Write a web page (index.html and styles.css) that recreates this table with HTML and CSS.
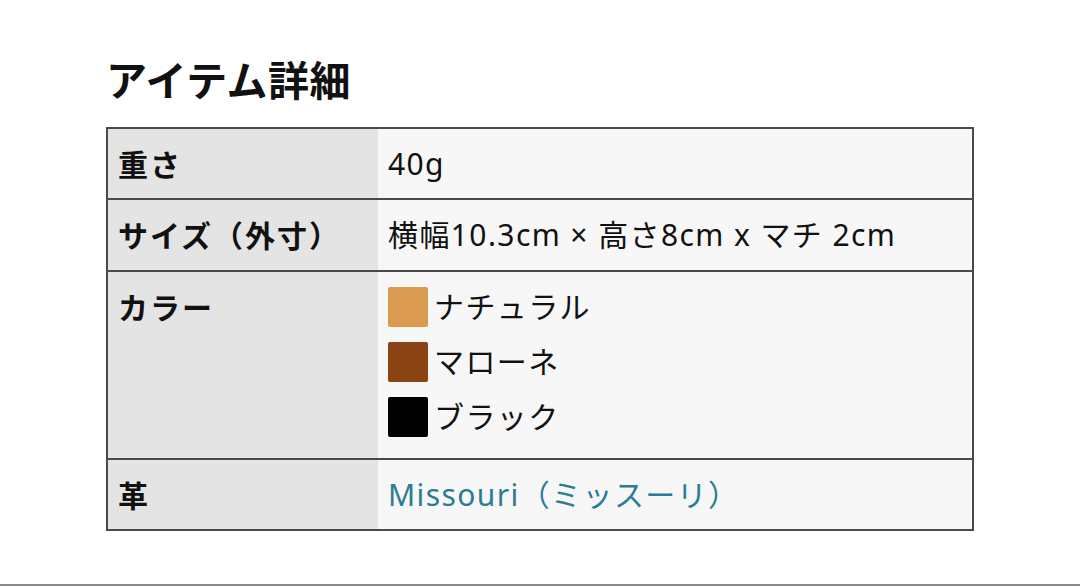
FILE: index.html
```html
<!DOCTYPE html>
<html lang="ja">
<head>
<meta charset="utf-8">
<title>アイテム詳細</title>
<link rel="stylesheet" href="styles.css">
</head>
<body>
<main class="page">
  <h2 class="title">アイテム詳細</h2>
  <table class="spec">
    <tr>
      <th>重さ</th>
      <td>40g</td>
    </tr>
    <tr class="size-row">
      <th>サイズ（外寸）</th>
      <td>横幅10.3cm × 高さ8cm x マチ 2cm</td>
    </tr>
    <tr class="colors-row">
      <th>カラー</th>
      <td>
        <ul class="colors">
          <li><span class="swatch natural"></span>ナチュラル</li>
          <li><span class="swatch marrone"></span>マローネ</li>
          <li><span class="swatch black"></span>ブラック</li>
        </ul>
      </td>
    </tr>
    <tr>
      <th>革</th>
      <td><a class="link" href="#">Missouri（ミッスーリ）</a></td>
    </tr>
  </table>
</main>
<div class="rule"></div>
</body>
</html>
```

FILE: styles.css
```css
html, body {
  margin: 0;
  padding: 0;
  background: #ffffff;
}
body {
  width: 1080px;
  height: 587px;
  overflow: hidden;
  position: relative;
  font-family: "Noto Sans", "Noto Sans CJK JP", sans-serif;
  color: #111;
}
.page {
  padding: 50px 0 0 106px;
  height: 532px;
  box-sizing: border-box;
}
.title {
  margin: 0 0 21px 0;
  font-family: "Noto Sans CJK JP", sans-serif;
  font-size: 41px;
  font-weight: 700;
  line-height: 56px;
  letter-spacing: 0.5px;
}
.spec {
  border-collapse: collapse;
  width: 868px;
  font-size: 30px;
}
.spec th,
.spec td {
  border: 2px solid #4a4a4a;
  padding: 13px 10px 13px 10px;
  line-height: 43px;
  text-align: left;
  vertical-align: top;
}
.spec th {
  width: 250px;
  background: #e4e4e4;
  font-weight: 700;
  font-family: "Noto Sans CJK JP", sans-serif;
  letter-spacing: 2px;
  border-right: none;
}
.spec td {
  background: #f7f7f7;
  font-weight: 400;
  letter-spacing: 1.4px;
  border-left: none;
}
.size-row th,
.size-row td {
  padding-bottom: 14px;
}
.colors-row th {
  padding-top: 13px;
}
.colors-row td {
  padding: 15px 10px 21px 10px;
}
.colors {
  list-style: none;
  margin: 0;
  padding: 0;
  display: flex;
  flex-direction: column;
  gap: 15px;
}
.colors li {
  display: flex;
  align-items: center;
  gap: 6px;
  height: 40px;
  line-height: 40px;
}
.swatch {
  width: 40px;
  height: 40px;
  border-radius: 2px;
  flex: none;
}
.natural { background: #da9a50; }
.marrone { background: #8a4414; }
.black { background: #000; }
.link {
  color: #2b7d93;
  text-decoration: none;
}
.rule {
  position: absolute;
  left: 0;
  right: 0;
  top: 584px;
  height: 2px;
  background: #8a8a8a;
}
```
